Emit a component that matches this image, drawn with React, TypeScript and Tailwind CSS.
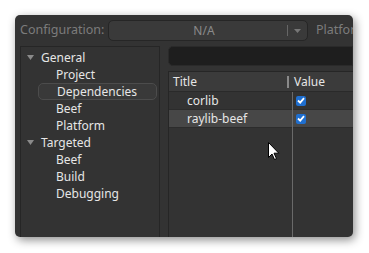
import React from 'react';

const TreeRow = ({ label, level }: { label: string; level: number }) => (
  <div className={`h-[17px] flex items-center ${level === 0 ? 'pl-[6px]' : 'pl-[35px]'}`}>
    {level === 0 && (
      <svg width="7" height="5" viewBox="0 0 7 5" className="mr-[7px]">
        <path d="M0 0 L7 0 L3.5 5 Z" fill="#8a8a8a" />
      </svg>
    )}
    <span>{label}</span>
  </div>
);

const Check = () => (
  <div className="w-[10px] h-[10px] rounded-[2px] bg-[#1f6fd0] flex items-center justify-center">
    <svg width="8" height="7" viewBox="0 0 8 7">
      <path d="M1 3.5 L3.2 5.6 L7 1.2" stroke="#fff" strokeWidth="1.8" fill="none" />
    </svg>
  </div>
);

export default function App() {
  const deps = ['corlib', 'raylib-beef'];

  return (
    <div className="w-[369px] h-[253px] bg-white overflow-hidden pt-[15px] pl-[15px] font-['Noto_Sans',sans-serif] text-[12px]">
      <div className="relative w-[338px] h-[222px] rounded-[5px] bg-[#333333] shadow-[2px_3px_10px_rgba(0,0,0,0.45)] overflow-hidden flex flex-col">
        {/* config bar */}
        <div className="h-[30px] flex items-center pl-[5px] pt-[1px] whitespace-nowrap">
          <span className="shrink-0 text-[#7c7c7c] text-[12.5px] w-[88px]">Configuration:</span>
          <div className="shrink-0 w-[200px] h-[21px] rounded-[5px] border border-[#262626] bg-[#3a3a3a] flex items-center text-[#8a8a8a]">
            <span className="flex-1 text-center pl-[12px]">N/A</span>
            <span className="w-px h-[11px] bg-[#666]" />
            <svg width="7" height="4" viewBox="0 0 7 4" className="mx-[6px]">
              <path d="M0 0 L7 0 L3.5 4 Z" fill="#777" />
            </svg>
          </div>
          <span className="shrink-0 ml-[8px] text-[12.5px] text-[#7c7c7c]">Platform:</span>
        </div>

        <div className="flex flex-1 pl-[5px] pt-[1px] gap-[8px]">
          {/* tree */}
          <div className="shrink-0 w-[140px] border border-[#262626] border-b-0 pt-[2px] text-[#e6e6e6]">
            <TreeRow label="General" level={0} />
            <TreeRow label="Project" level={1} />
            <div className="h-[17px] flex items-center ml-[17px] mr-[2px] pl-[18px] rounded-[5px] border border-[#4c4c4c] bg-[#393939]">
              Dependencies
            </div>
            <TreeRow label="Beef" level={1} />
            <TreeRow label="Platform" level={1} />
            <TreeRow label="Targeted" level={0} />
            <TreeRow label="Beef" level={1} />
            <TreeRow label="Build" level={1} />
            <TreeRow label="Debugging" level={1} />
          </div>

          {/* right */}
          <div className="flex-1 flex flex-col min-w-0">
            <div className="h-[20px] rounded-l-[5px] bg-[#1e1e1e] border border-[#2a2a2a]" />
            <div className="mt-[5px] flex-1 border-l border-t border-[#262626] flex flex-col text-[#e6e6e6]">
              <div className="h-[20px] flex items-center bg-[#3b3b3b] border-b border-[#2a2a2a]">
                <span className="w-[118px] pl-[4px]">Title</span>
                <span className="w-[2px] h-[12px] bg-[#8a8a8a] mr-[5px]" />
                <span>Value</span>
              </div>
              <div className="relative flex-1">
                <div className="absolute left-[123px] top-0 bottom-0 w-px bg-[#6a6a6a]" />
                {deps.map((d, i) => (
                  <div
                    key={d}
                    className={`h-[18px] flex items-center border-b border-[#2c2c2c] ${i === 1 ? 'bg-[#474747]' : ''}`}
                  >
                    <span className="w-[127px] pl-[18px]">{d}</span>
                    <Check />
                  </div>
                ))}
              </div>
            </div>
          </div>
        </div>

        {/* mouse cursor */}
        <svg width="12" height="19" viewBox="0 0 12 19" className="absolute left-[253px] top-[127px]">
          <path d="M0.5 0.5 L0.5 15.5 L4 12 L6.5 17.5 L8.5 16.6 L6 11.2 L10.8 11.2 Z" fill="#fff" stroke="#000" strokeWidth="1" />
        </svg>
      </div>
    </div>
  );
}
